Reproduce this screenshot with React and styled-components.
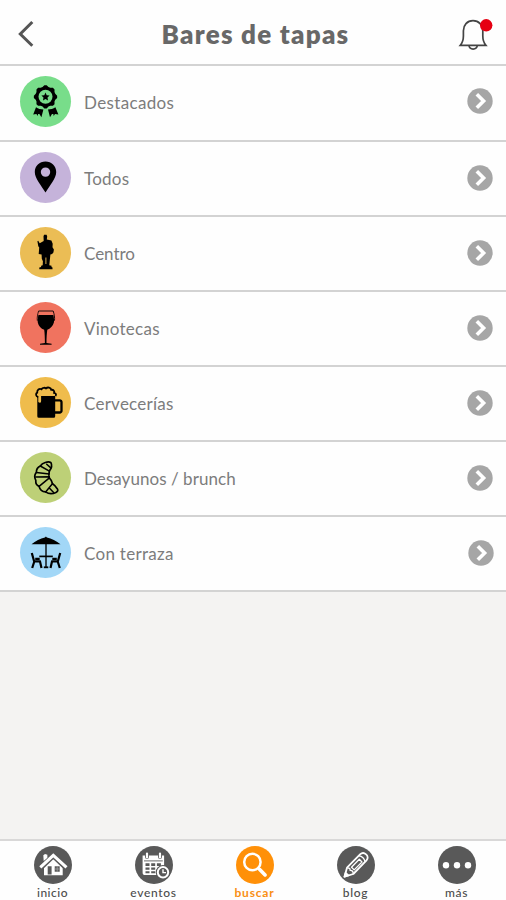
import React, { useState } from "react";
import styled, { createGlobalStyle } from "styled-components";

const GlobalStyle = createGlobalStyle`
  * {
    box-sizing: border-box;
  }

  body {
    margin: 0;
    background: #f4f3f2;
    font-family: Lato, "Open Sans", sans-serif;
  }
`;

const Screen = styled.div`
  display: flex;
  flex-direction: column;
  height: 900px;
  overflow: hidden;
`;

// Header ---------------------------
const Header = styled.header`
  display: grid;
  grid-template-columns: 60px 1fr 60px;
  align-items: center;
  height: 66px;
  background: #fefefe;
  border-bottom: 2px solid #d3d3d3;
`;

const Title = styled.h1`
  margin: 4px 0 0 5px;
  color: #686868;
  font-size: 26px;
  line-height: 32px;
  font-weight: 800;
  letter-spacing: 1.25px;
  text-align: center;
  white-space: nowrap;
`;

const IconButton = styled.button`
  display: flex;
  justify-content: flex-start;
  padding: ${({ $inset }) => $inset};
  border: none;
  background: none;
  cursor: pointer;
`;

// Category list --------------------
const List = styled.ul`
  flex: 1;
  margin: 0;
  padding: 0;
  list-style: none;
`;

const Row = styled.li`
  display: flex;
  align-items: flex-start;
  height: 75px;
  padding: 10px 13px 0 20px;
  background: #fefefe;
  border-bottom: 2px solid #d3d3d3;

  &:first-child {
    height: 76px;
  }

  &:last-child {
    padding-right: 12px;
  }
`;

const Badge = styled.span`
  display: block;
  width: 51px;
  height: 51px;
  border-radius: 50%;
  background: ${({ $color }) => $color};
`;

const Label = styled.span`
  flex: 1;
  padding: 15px 0 0 13px;
  color: #7c7c7c;
  font-size: 17px;
  line-height: 24px;
  letter-spacing: ${({ $tracking }) => $tracking}px;
`;

const Arrow = styled.svg`
  display: block;
  margin-top: 13px;

  ${Row}:first-child & {
    margin-top: 12px;
  }
`;

// Bottom bar -----------------------
const Nav = styled.nav`
  display: grid;
  grid-template-columns: repeat(5, 101px);
  height: 61px;
  padding-left: 2px;
  background: #fefefe;
  border-top: 2px solid #d9d8d8;
`;

const NavItem = styled.button`
  display: flex;
  flex-direction: column;
  align-items: center;
  padding: 5px 0 0;
  border: none;
  background: none;
  color: ${({ $active }) => ($active ? "#f98f14" : "#4c4c4c")};
  font-family: inherit;
  font-size: 12px;
  line-height: 14px;
  font-weight: ${({ $active }) => ($active ? 700 : 500)};
  letter-spacing: ${({ $tracking }) => $tracking}px;
  cursor: pointer;
`;

const NavCircle = styled.span`
  width: 38px;
  height: 38px;
  margin-bottom: 2px;
  border-radius: 50%;
  background: ${({ $active }) => ($active ? "#ff9008" : "#595959")};
`;

const burst = Array.from({ length: 32 }, (_, i) => {
  const r = i % 4 < 2 ? 11.7 : 10.2;
  const a = ((i - 0.5) * Math.PI) / 16 - Math.PI / 2;
  return `${(25.5 + r * Math.cos(a)).toFixed(2)},${(20.8 + r * Math.sin(a)).toFixed(2)}`;
}).join(" ");

const MedalIcon = () => (
  <svg width="51" height="51" viewBox="0 0 51 51">
    <polygon points={burst} />
    <circle cx="25.5" cy="20.8" r="7" fill="#78dd8a" />
    <path d="M25.5 16.6l1.200 2.600 2.900.4-2.100 2 .5 2.900-2.500-1.400-2.500 1.400.5-2.900-2.100-2 2.900-.4z" />
    <path d="M16 31.300c2.200 1.800 4.700 2.100 7.400 2.300l-2 7.700-2-3.400-1.300.2-.4 2-1.300-2-3.200.3z" />
    <path d="M35.400 31.300c-2.200 1.800-4.700 2.100-7.400 2.300l2 7.700 2-3.400 1.300.2.400 2 1.300-2 3.400.3z" />
  </svg>
);

const PinIcon = () => (
  <svg width="51" height="51" viewBox="0 0 51 51">
    <path
      fillRule="evenodd"
      d="M25.500 9.600c-6 0-10.700 4.600-10.700 10.500 0 6.400 6 12.900 10.700 20.400 4.700-7.500 10.700-14 10.700-20.400 0-5.900-4.700-10.500-10.700-10.500zm0 5.800a4.700 4.700 0 1 1 0 9.400 4.700 4.700 0 0 1 0-9.400z"
    />
  </svg>
);

const StatueIcon = () => (
  <svg width="51" height="51" viewBox="0 0 51 51">
    <path d="M23.500 9.200l.6-1.500h2.500l.6 1.700-.4 3 4.600 1.200 1.300 3.200-.2 3.500 1.400 2.300-.5 2.800-1.300 1.500-1.700.6-.5 4.700-.6 6 2.200.5v1.300l1 .6v1.700H19.300v-1.700l1.800-.6v-1.200l1.600-.5.2-4-1.100-2.500-.2-4.300-2.900-.6.5-6.400-.9-1.300-.9-4.900.8-.5 1.500 2.500 4-2.300z" />
    <path d="M25.900 30.500v6.500" stroke="#ebbd55" strokeWidth="0.900" />
  </svg>
);

const WineIcon = () => (
  <svg width="51" height="51" viewBox="0 0 51 51">
    <path d="M18.600 9h14.600c1 3.200 1.700 6.600 1.300 9.700" fill="none" stroke="#000" strokeWidth="0.900" />
    <path d="M18.600 9c-1 3.200-1.700 6.600-1.300 9.700" fill="none" stroke="#000" strokeWidth="0.800" />
    <path d="M18.400 12.900h15c.5 2.400.9 5.600.5 7.600-.9 3.700-3.700 6.100-6.600 7.300-.5 3.600-.8 8-.8 13.100l5.100.9v.9H20v-.9l4.900-.9c0-5.100-.2-9.500-.7-13.100-3.200-1.200-5.700-3.700-6.400-7.300-.4-2.200.1-5.200.6-7.600z" />
  </svg>
);

const BeerIcon = () => (
  <svg width="51" height="51" viewBox="0 0 51 51">
    <path d="M17.300 18.500H35.200v20.800a1.500 1.500 0 0 1-1.500 1.500H18.800a1.500 1.500 0 0 1-1.500-1.500z" />
    <path d="M35 23.400h4.700a1.800 1.800 0 0 1 1.800 1.800v8.500a1.800 1.800 0 0 1-1.800 1.800H35" fill="none" stroke="#000" strokeWidth="2.300" />
    <path
      d="M18.300 25V19.600c-2.300-.9-2.500-3.200-1-4.200-.3-2.500 2-4.200 4.200-3.100 1-2 3.600-1.800 4.500-.9 1.600-1.700 4.800-.8 5.100 1.400 2.300-.4 3.600 1.500 2.900 3 2 .4 2.200 2.100 1 3.200H21.100V24c0 2-1.500 2.200-2.800 1z"
      fill="#efbc4c"
    />
    <path
      d="M18.200 20.200c-2.600-.8-2.700-3.600-1-4.600-.3-2.700 2.100-4.500 4.300-3.300 1-2 3.600-1.800 4.500-.8 1.600-1.800 4.900-.9 5.200 1.300 2.300-.4 3.500 1.500 2.900 3 2.100.4 2.300 1.900 1.400 3.300"
      fill="none"
      stroke="#000"
      strokeWidth="1.800"
    />
  </svg>
);

const CroissantIcon = () => (
  <svg width="51" height="51" viewBox="0 0 51 51" fill="none" stroke="#000" strokeWidth="1.700" strokeLinecap="round" strokeLinejoin="round">
    <path d="M30.800 10.400c-2.800-1.500-8.400.4-10.500 3.600-2.800 1.300-4 3.800-3.900 6.300-1.900 2.400-2.100 5.600-.6 8.100-.3 2.700 1 5 3.300 6 .8 3.500 3.600 5.400 6.500 5.500 3.200 2.200 7.500 1.900 10.300.5 1.800-1 2.400-2.100 1.500-3.500-1.400-2-3.100-4.100-4.900-5.100-.6-2.500-1.700-4.500-3.200-5.900-.7-2.500-.6-4.800.1-6.800 1.800-2.400 2.900-6 1.400-8.700z" />
    <path d="M20.300 14l9.100 5.100M26.700 12.200l4.100 3.700M16.400 20.600l12.900 1.400M15.700 25l13.600-.3M19.100 34.400l10.300-8.500M25.600 39.900l7-8.300M29.300 36l4.300 4.500" strokeWidth="1.500" />
  </svg>
);

const TerraceIcon = () => (
  <svg width="51" height="51" viewBox="0 0 51 51">
    <path d="M25.900 9.500l1 .9c4.500 1 9.600 3.300 13.600 6.900H11.500c4-3.600 8.900-5.900 13.400-6.900z" />
    <g fill="none" stroke="#000">
      <path d="M26 17v23" strokeWidth="1.800" strokeOpacity="0.750" />
      <path d="M19.300 29.400h13.500" strokeWidth="1.700" />
      <path d="M23.800 40.300h4.500" strokeWidth="1.800" />
      <path d="M11.800 26l2.300 8.200M13.200 34.300h7.600M14.300 34.500L12.200 41M20 34.500l1.500 6.500M15.200 31.800h4.500" strokeWidth="2.200" />
      <path d="M40.200 26l-2.300 8.200M38.800 34.300h-7.600M37.700 34.500l2.100 6.500M32 34.500L30.500 41M36.800 31.800h-4.500" strokeWidth="2.200" />
    </g>
  </svg>
);

const HomeIcon = () => (
  <svg width="38" height="38" viewBox="0 0 38 38">
    <path d="M9.300 9.300l1.700-1.200 2.400.7v3l-3.700 3.300z" fill="#fff" />
    <path d="M10 20.500l9.300-8.500 9.400 8.500v8.800H10z" fill="#fff" />
    <path d="M7.500 22.400L19.300 11.200l11.900 11.200" fill="none" stroke="#595959" strokeWidth="3.200" />
    <path d="M6.300 21.400L19.300 9.300l13.200 12.100" fill="none" stroke="#fff" strokeWidth="3" />
    <path d="M13.700 20.300h3.900v8.100h-3.900zM20.700 20.300h5v5.500h-5z" fill="#595959" />
    <path d="M23.200 20.300v5.500M20.700 23h5" stroke="#aaa" strokeWidth="0.700" />
  </svg>
);

const CalendarIcon = () => (
  <svg width="38" height="38" viewBox="0 0 38 38">
    <path d="M7.600 9.500h21.500v19.600H10.200a2.600 2.600 0 0 1-2.600-2.600z" fill="#fff" />
    <path d="M12 7v4M25 7v4" stroke="#595959" strokeWidth="3.900" strokeLinecap="round" />
    <path d="M12 7.500v4M25 7.500v4" stroke="#fff" strokeWidth="2.200" strokeLinecap="round" />
    <path d="M9 14.900h18.800" stroke="#595959" strokeWidth="0.900" />
    <path
      d="M10.500 17.300h4v2.700h-4zM16.200 17.300h4v2.700h-4zM21.900 17.300h4v2.700h-4zM10.500 21.400h4v2.400h-4zM16.200 21.400h4v2.400h-4zM10.500 25.200h4v2h-4zM16.200 25.200h4v2h-4z"
      fill="#595959"
    />
    <circle cx="28" cy="26.300" r="7.300" fill="#595959" />
    <circle cx="28" cy="26.300" r="5.200" fill="#595959" stroke="#fff" strokeWidth="2" />
    <path d="M28 23.200v3.400h3" fill="none" stroke="#fff" strokeWidth="1.400" />
  </svg>
);

const SearchIcon = () => (
  <svg width="38" height="38" viewBox="0 0 38 38" fill="none" stroke="#fff" strokeLinecap="round">
    <circle cx="16.400" cy="16" r="8.200" strokeWidth="2.500" />
    <path d="M23.500 23.300l5.600 5.600" strokeWidth="3.600" />
  </svg>
);

const PencilIcon = () => (
  <svg width="38" height="38" viewBox="0 0 38 38" fill="none" stroke="#fff" strokeWidth="1.800" strokeLinejoin="round">
    <path d="M7.500 30.700l2.500-9L23.300 8.200c1.800-1.700 4.200-1.300 5.800.2 1.800 1.600 2.200 4.100.4 6L16.300 28z" />
    <path d="M7.500 30.700l1.100-3.900 2.700 2.700z" fill="#fff" />
    <path d="M10.200 21.900c2.400-.1 3.100 1 2.900 2.500 1.900-.2 3.100.9 3.100 3.300" strokeWidth="1.400" />
    <path d="M14.500 21.200l7.800-7.900 2.700 2.700-7.800 7.900zM22 9.800c2.900.2 5.700 2.900 6 6" strokeWidth="1.300" />
  </svg>
);

const MoreIcon = () => (
  <svg width="38" height="38" viewBox="0 0 38 38" fill="#fff">
    <circle cx="8" cy="19.200" r="3.200" />
    <circle cx="19" cy="19.200" r="3.200" />
    <circle cx="30" cy="19.200" r="3.200" />
  </svg>
);

const categories = [
  { name: "Destacados", color: "#78dd8a", icon: MedalIcon, tracking: 0.35 },
  { name: "Todos", color: "#c5b3da", icon: PinIcon, tracking: 0.25 },
  { name: "Centro", color: "#ebbd55", icon: StatueIcon, tracking: -0.05 },
  { name: "Vinotecas", color: "#f0735f", icon: WineIcon, tracking: 0.25 },
  { name: "Cervecerías", color: "#efbc4c", icon: BeerIcon, tracking: 0.25 },
  { name: "Desayunos / brunch", color: "#bdd077", icon: CroissantIcon, tracking: 0.05 },
  { name: "Con terraza", color: "#a2d7f7", icon: TerraceIcon, tracking: 0.3 },
];

const tabs = [
  { name: "inicio", icon: HomeIcon, tracking: 0.5 },
  { name: "eventos", icon: CalendarIcon, tracking: 0.7 },
  { name: "buscar", icon: SearchIcon, tracking: 0.8 },
  { name: "blog", icon: PencilIcon, tracking: 0.7 },
  { name: "más", icon: MoreIcon, tracking: 0.7 },
];

export default function App() {
  const [activeTab, setActiveTab] = useState("buscar");

  return (
    <Screen>
      <GlobalStyle />
      <Header>
        <IconButton $inset="4px 0 0 17px">
          <svg width="18" height="28" viewBox="0 0 18 28" fill="none" stroke="#555" strokeWidth="3">
            <path d="M15.300 2L3.300 14l12 11.700" />
          </svg>
        </IconButton>
        <Title>Bares de tapas</Title>
        <IconButton $inset="4px 0 0 12px">
          <svg width="36" height="34" viewBox="0 0 36 34" fill="none" stroke="#444" strokeWidth="1.700">
            <path d="M2.300 28.300c2.300-2.700 3.100-5.600 3.100-9.300v-5.300c0-5.700 3.700-10 9.600-10s9.800 4.300 9.800 10V19c0 3.700.8 6.600 3.100 9.300z" />
            <path d="M11 28.700c.7 4.500 7.500 4.500 8.300 0" />
            <circle cx="28.200" cy="8.300" r="6.200" fill="#e60012" stroke="none" />
          </svg>
        </IconButton>
      </Header>

      <List>
        {categories.map(({ name, color, icon: Icon, tracking }) => (
          <Row key={name}>
            <Badge $color={color}>
              <Icon />
            </Badge>
            <Label $tracking={tracking}>{name}</Label>
            <Arrow width="26" height="26" viewBox="0 0 26 26">
              <circle cx="13" cy="13" r="12.700" fill="#a6a6a6" />
              <path d="M9.800 6.200l6.800 6.800-6.800 6.800" fill="none" stroke="#fff" strokeWidth="3.600" />
            </Arrow>
          </Row>
        ))}
      </List>

      <Nav>
        {tabs.map(({ name, icon: Icon, tracking }) => (
          <NavItem
            key={name}
            $active={name === activeTab}
            $tracking={tracking}
            onClick={() => setActiveTab(name)}
          >
            <NavCircle $active={name === activeTab}>
              <Icon />
            </NavCircle>
            {name}
          </NavItem>
        ))}
      </Nav>
    </Screen>
  );
}
